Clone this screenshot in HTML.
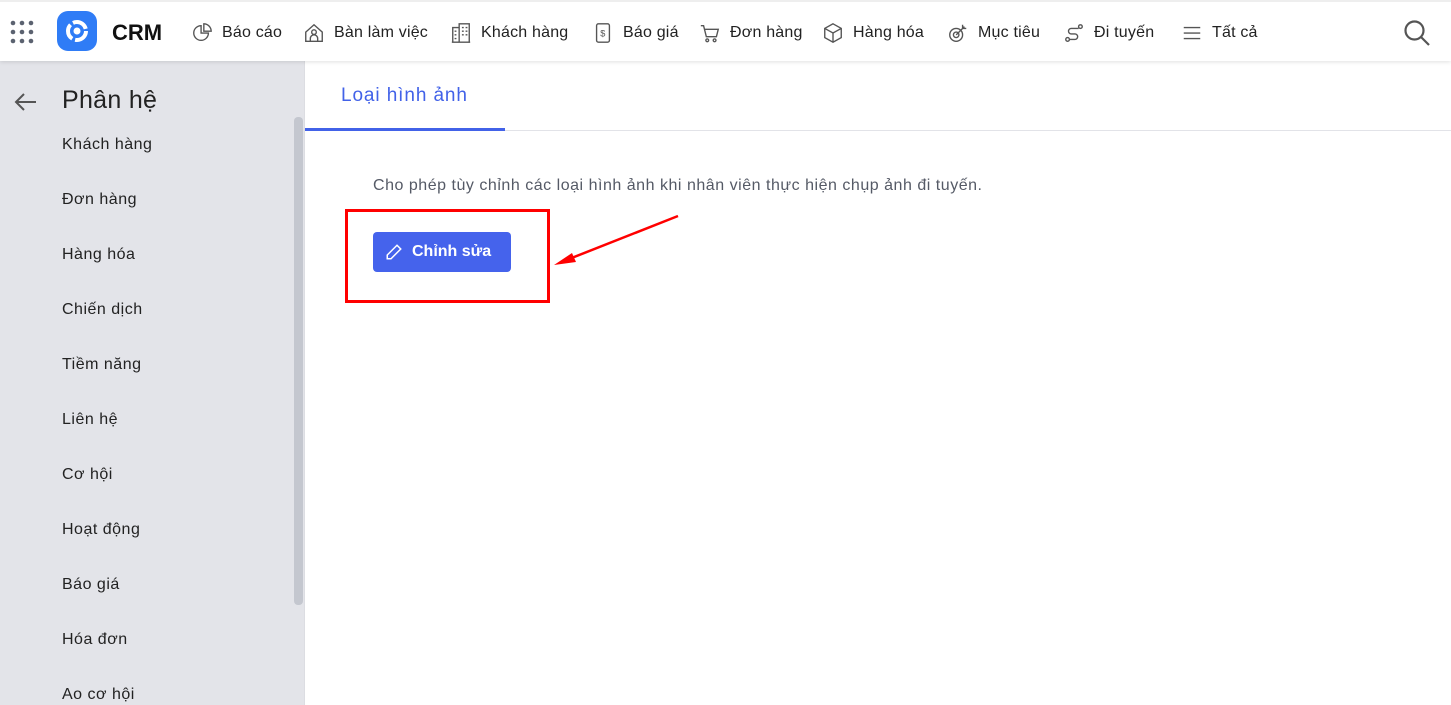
<!DOCTYPE html>
<html><head><meta charset="utf-8"><style>
*{margin:0;padding:0;box-sizing:border-box}
body{width:1451px;height:705px;overflow:hidden;font-family:"Liberation Sans",sans-serif;background:#fff;position:relative;color:#222}
.top{position:absolute;left:0;top:0;width:1451px;height:61px;background:#fff;box-shadow:0 1px 4px rgba(0,0,0,.12);z-index:2;border-top:2px solid #eee}
.nav{position:absolute;top:20px;font-size:16px;color:#222;display:flex;align-items:center;white-space:nowrap;letter-spacing:0.2px}
.nav svg{margin-right:9px}
.side{position:absolute;left:0;top:61px;width:304px;height:644px;background:#e3e4e9}
.side .it{position:absolute;left:62px;font-size:16px;color:#222;letter-spacing:0.5px}
.thumb{position:absolute;left:294px;top:117px;width:9px;height:488px;background:#c4c7cf;border-radius:4px}
.divider{position:absolute;left:304px;top:61px;width:1px;height:644px;background:#dcdde2}
</style></head><body>
<div class="top">
 <svg style="position:absolute;left:10px;top:18px" width="24" height="24" viewBox="0 0 24 24" fill="#5b6270"><circle cx="3" cy="3" r="2.3"/><circle cx="12" cy="3" r="2.3"/><circle cx="21" cy="3" r="2.3"/><circle cx="3" cy="12" r="2.3"/><circle cx="12" cy="12" r="2.3"/><circle cx="21" cy="12" r="2.3"/><circle cx="3" cy="21" r="2.3"/><circle cx="12" cy="21" r="2.3"/><circle cx="21" cy="21" r="2.3"/></svg>
 <div style="position:absolute;left:57px;top:9px;width:40px;height:40px;border-radius:11px;background:#2f7cf6"></div>
 <svg style="position:absolute;left:64px;top:16px" width="26" height="26" viewBox="0 0 26 26"><circle cx="13" cy="13" r="9" fill="none" stroke="#fff" stroke-width="4" stroke-dasharray="16 3"/><circle cx="13" cy="13" r="3.5" fill="#fff"/></svg>
 <div style="position:absolute;left:112px;top:18px;font-size:22px;font-weight:bold;color:#111">CRM</div>
 <div class="nav" style="left:191px"><svg width="22" height="22" viewBox="0 0 24 24" fill="none" stroke="#555" stroke-width="1.5"><path d="M11 4a8 8 0 1 0 8 8h-8z"/><path d="M14 2v8h8a8 8 0 0 0-8-8z"/></svg>Báo cáo</div>
 <div class="nav" style="left:303px"><svg width="22" height="22" viewBox="0 0 24 24" fill="none" stroke="#555" stroke-width="1.5"><path d="M3 11l9-8 9 8v10H3z"/><circle cx="12" cy="11" r="2.5"/><path d="M8 21v-3a4 4 0 0 1 8 0v3"/></svg>Bàn làm việc</div>
 <div class="nav" style="left:450px"><svg width="22" height="22" viewBox="0 0 24 24" fill="none" stroke="#555" stroke-width="1.5"><path d="M3 22V6h7v16M10 22V2h11v20M2 22h20M5 10h2M5 14h2M5 18h2M13 6h2M17 6h2M13 10h2M17 10h2M13 14h2M17 14h2"/></svg>Khách hàng</div>
 <div class="nav" style="left:592px"><svg width="22" height="22" viewBox="0 0 24 24" fill="none" stroke="#555" stroke-width="1.5"><rect x="5" y="2" width="14" height="20" rx="2"/><text x="9" y="16" font-size="10" fill="#555" stroke="none">$</text></svg>Báo giá</div>
 <div class="nav" style="left:699px"><svg width="22" height="22" viewBox="0 0 24 24" fill="none" stroke="#555" stroke-width="1.5"><path d="M2 4h3l3 12h11l2-8H6"/><circle cx="9" cy="20" r="1.5"/><circle cx="17" cy="20" r="1.5"/></svg>Đơn hàng</div>
 <div class="nav" style="left:822px"><svg width="22" height="22" viewBox="0 0 24 24" fill="none" stroke="#555" stroke-width="1.5"><path d="M12 2l9 5v10l-9 5-9-5V7z"/><path d="M3 7l9 5 9-5M12 12v10"/></svg>Hàng hóa</div>
 <div class="nav" style="left:947px"><svg width="22" height="22" viewBox="0 0 24 24" fill="none" stroke="#555" stroke-width="1.5"><circle cx="10" cy="14" r="7"/><circle cx="10" cy="14" r="3"/><path d="M10 14l9-9M17 3v4h4"/></svg>Mục tiêu</div>
 <div class="nav" style="left:1063px"><svg width="22" height="22" viewBox="0 0 24 24" fill="none" stroke="#555" stroke-width="1.5"><circle cx="5" cy="19" r="2"/><circle cx="19" cy="5" r="2"/><path d="M7 19h6a3 3 0 0 0 0-6h-4a3 3 0 0 1 0-6h8"/></svg>Đi tuyến</div>
 <div class="nav" style="left:1181px"><svg width="22" height="22" viewBox="0 0 24 24" fill="none" stroke="#555" stroke-width="1.5"><path d="M3 6h18M3 12h18M3 18h18"/></svg>Tất cả</div>
 <svg style="position:absolute;left:1403px;top:17px" width="28" height="28" viewBox="0 0 28 28" fill="none" stroke="#555" stroke-width="2.2"><circle cx="11.5" cy="11.5" r="9"/><path d="M18 18l8 8"/></svg>
</div>
<div class="side">
 <svg style="position:absolute;left:14px;top:31px" width="24" height="20" viewBox="0 0 24 20" fill="none" stroke="#555" stroke-width="2"><path d="M22 10H3M10 2L2 10l8 8"/></svg>
 <div style="position:absolute;left:62px;top:25px;font-size:25px;color:#222;letter-spacing:0.3px">Phân hệ</div>
 <div class="it" style="top:75px">Khách hàng</div>
 <div class="it" style="top:130px">Đơn hàng</div>
 <div class="it" style="top:185px">Hàng hóa</div>
 <div class="it" style="top:240px">Chiến dịch</div>
 <div class="it" style="top:295px">Tiềm năng</div>
 <div class="it" style="top:350px">Liên hệ</div>
 <div class="it" style="top:405px">Cơ hội</div>
 <div class="it" style="top:460px">Hoạt động</div>
 <div class="it" style="top:515px">Báo giá</div>
 <div class="it" style="top:570px">Hóa đơn</div>
 <div class="it" style="top:625px">Ao cơ hội</div>
</div>
<div class="thumb"></div>
<div class="divider"></div>
<div style="position:absolute;left:341px;top:85px;font-size:19px;color:#4262e8;letter-spacing:0.9px">Loại hình ảnh</div>
<div style="position:absolute;left:305px;top:130px;width:1146px;height:1px;background:#e2e3e8"></div>
<div style="position:absolute;left:305px;top:128px;width:200px;height:3px;background:#4262e8"></div>
<div style="position:absolute;left:373px;top:177px;font-size:16px;color:#555a66;letter-spacing:0.52px">Cho phép tùy chỉnh các loại hình ảnh khi nhân viên thực hiện chụp ảnh đi tuyến.</div>
<div style="position:absolute;left:345px;top:209px;width:205px;height:94px;border:3px solid #f00"></div>
<div style="position:absolute;left:373px;top:232px;width:138px;height:40px;background:#4563ec;border-radius:4px;color:#fff;font-size:16px;font-weight:bold;display:flex;align-items:center;padding-left:12px">
 <svg width="18" height="18" viewBox="0 0 24 24" fill="none" stroke="#fff" stroke-width="2" style="margin-right:9px"><path d="M16 3l5 5L8 21H3v-5z"/></svg>Chỉnh sửa</div>
<svg style="position:absolute;left:550px;top:210px" width="135" height="60" viewBox="0 0 135 60"><path d="M128 6L14 51" stroke="#f00" stroke-width="2.5"/><path d="M4 55l18-12 4 9z" fill="#f00"/></svg>
</body></html>
